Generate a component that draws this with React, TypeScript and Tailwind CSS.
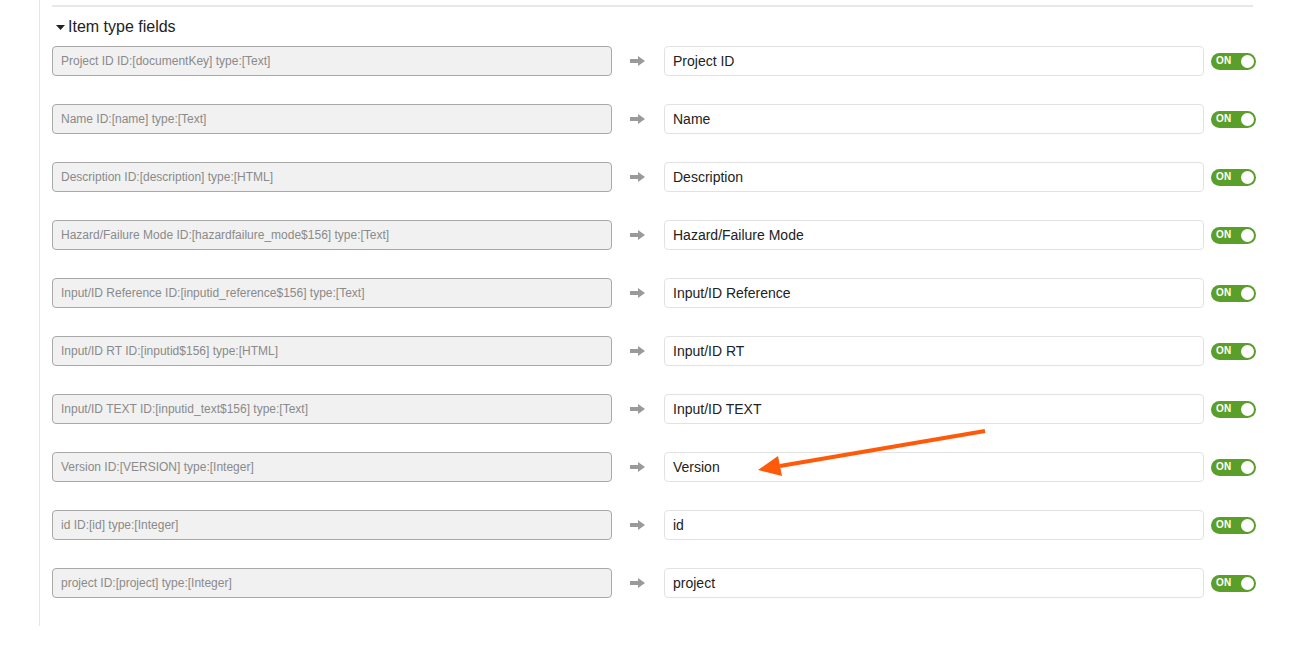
import React from "react";

const rows: [string, string][] = [
  ["Project ID ID:[documentKey] type:[Text]", "Project ID"],
  ["Name ID:[name] type:[Text]", "Name"],
  ["Description ID:[description] type:[HTML]", "Description"],
  ["Hazard/Failure Mode ID:[hazardfailure_mode$156] type:[Text]", "Hazard/Failure Mode"],
  ["Input/ID Reference ID:[inputid_reference$156] type:[Text]", "Input/ID Reference"],
  ["Input/ID RT ID:[inputid$156] type:[HTML]", "Input/ID RT"],
  ["Input/ID TEXT ID:[inputid_text$156] type:[Text]", "Input/ID TEXT"],
  ["Version ID:[VERSION] type:[Integer]", "Version"],
  ["id ID:[id] type:[Integer]", "id"],
  ["project ID:[project] type:[Integer]", "project"],
];

function Arrow() {
  return (
    <svg width="15" height="10" viewBox="0 0 15 10">
      <rect x="0" y="3" width="9" height="4" fill="#9a9a9a" />
      <polygon points="8,0 15,5 8,10" fill="#9a9a9a" />
    </svg>
  );
}

function Toggle() {
  return (
    <div className="relative w-[45px] h-[17px] rounded-full bg-[#5b9f2b] flex items-center">
      <span className="pl-[5px] text-[10px] font-bold text-white leading-none tracking-[0.3px]">ON</span>
      <span className="absolute right-[2px] top-[2px] w-[13px] h-[13px] rounded-full bg-white" />
    </div>
  );
}

export default function App() {
  return (
    <div className="relative w-[1300px] h-[658px] bg-white" style={{ fontFamily: '"Liberation Sans", Arial, sans-serif' }}>
      <div className="ml-[39px] h-[626px] border-l border-[#e6e6e6] pl-[12px]">
        <div className="pt-[5px]">
          <div className="w-[1201px] h-[2px] bg-[#e8e8e8]" />
        </div>
        <div className="flex items-center h-[20px] mt-[10px] pl-[4px]">
          <svg width="9" height="6" viewBox="0 0 9 6" className="mr-[3px] mt-[1px]">
            <polygon points="0,0 9,0 4.5,5" fill="#222" />
          </svg>
          <span className="text-[16px] text-[#222]">Item type fields</span>
        </div>
        <div className="mt-[9px] flex flex-col gap-[28px]">
          {rows.map(([l, r]) => (
            <div key={l} className="flex items-center h-[30px]">
              <div className="w-[560px] h-[30px] rounded-[4px] border border-[#a9a9a9] bg-[#f1f1f1] flex items-center pl-[8px] text-[12px] text-[#8a8a8a]">
                {l}
              </div>
              <div className="w-[52px] flex justify-center pr-[2px]">
                <Arrow />
              </div>
              <div className="w-[540px] h-[30px] rounded-[4px] border border-[#e2e2e2] bg-white flex items-center pl-[8px] text-[14px] text-[#222]">
                {r}
              </div>
              <div className="ml-[7px]">
                <Toggle />
              </div>
            </div>
          ))}
        </div>
      </div>
      <svg className="absolute left-0 top-0 pointer-events-none" width="1300" height="658">
        <line x1="985" y1="431" x2="780" y2="466" stroke="#ff5a0a" strokeWidth="4" />
        <polygon points="758,470 778,456 782,476" fill="#ff5a0a" />
      </svg>
    </div>
  );
}
